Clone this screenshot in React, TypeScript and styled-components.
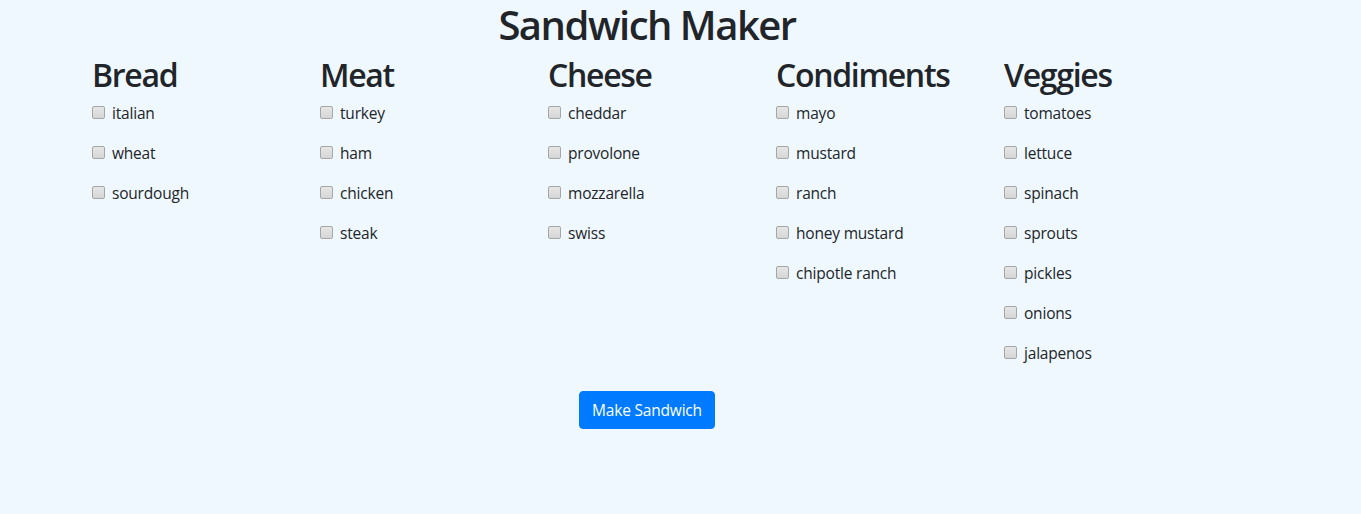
import React from "react";
import styled, { createGlobalStyle } from "styled-components";

const Global = createGlobalStyle`
  html, body { margin: 0; padding: 0; }
  body {
    background: #f0f8ff;
    color: #212529;
    font-family: "Open Sans", "Noto Sans", sans-serif;
    font-size: 16px;
    line-height: 1.5;
  }
`;

const Page = styled.div`
  width: 1140px;
  margin-left: 77px;
  display: flex;
  flex-direction: column;
  align-items: center;
`;

const Title = styled.h1`
  margin: 0 0 8px;
  padding-top: 1px;
  font-size: 40px;
  line-height: 47px;
  font-weight: 600;
  letter-spacing: -1.5px;
`;

const Columns = styled.div`
  display: flex;
  width: 100%;
`;

const Column = styled.div`
  width: 228px;
  padding: 0 15px;
  box-sizing: border-box;
`;

const Heading = styled.h2`
  margin: 0 0 8px;
  font-size: 32px;
  line-height: 38px;
  font-weight: 600;
  letter-spacing: -1.3px;
`;

const Item = styled.p`
  margin: 0 0 16px;
  display: flex;
  align-items: center;
  height: 24px;
  font-size: 15.5px;
  letter-spacing: -0.2px;
`;

const Box = styled.input`
  appearance: none;
  width: 13px;
  height: 13px;
  margin: -3px 7px 0 0;
  box-sizing: border-box;
  border: 1px solid #a6a6a6;
  border-radius: 2px;
  background: linear-gradient(#e6e6e6, #d6d6d6);
  flex: none;
`;

const Button = styled.button`
  margin-top: 9px;
  height: 38px;
  padding: 0 12px;
  border: 1px solid #007bff;
  border-radius: 4px;
  background: #007bff;
  color: #fff;
  font-family: inherit;
  font-size: 15.5px;
  letter-spacing: -0.2px;
  line-height: 24px;
  cursor: pointer;
`;

const groups: { name: string; items: string[] }[] = [
  { name: "Bread", items: ["italian", "wheat", "sourdough"] },
  { name: "Meat", items: ["turkey", "ham", "chicken", "steak"] },
  { name: "Cheese", items: ["cheddar", "provolone", "mozzarella", "swiss"] },
  {
    name: "Condiments",
    items: ["mayo", "mustard", "ranch", "honey mustard", "chipotle ranch"],
  },
  {
    name: "Veggies",
    items: ["tomatoes", "lettuce", "spinach", "sprouts", "pickles", "onions", "jalapenos"],
  },
];

export default function App() {
  return (
    <>
      <Global />
      <Page>
        <Title>Sandwich Maker</Title>
        <Columns>
          {groups.map((g) => (
            <Column key={g.name}>
              <Heading>{g.name}</Heading>
              {g.items.map((it) => (
                <Item key={it}>
                  <Box type="checkbox" />
                  <span>{it}</span>
                </Item>
              ))}
            </Column>
          ))}
        </Columns>
        <Button>Make Sandwich</Button>
      </Page>
    </>
  );
}
